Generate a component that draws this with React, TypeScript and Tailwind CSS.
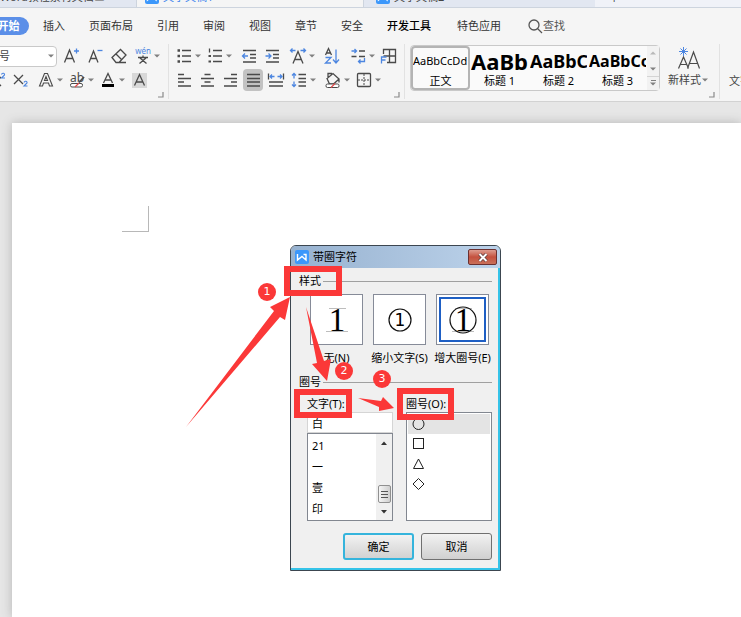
import { useState } from 'react'
import type { ReactNode } from 'react'

const INK = '#4a4a4a'
const BLUE = '#4d86e0'
const RED = '#fb3838'

function Caret() {
  return (
    <svg width="8" height="6" viewBox="0 0 8 6" className="shrink-0">
      <path d="M1 1.500h6L4 4.500z" fill="#808080" />
    </svg>
  )
}

/** Ribbon button: 20px icon cell, optional drop-down caret on its right. */
function Tool({
  label,
  caret,
  active,
  children
}: {
  label: string
  caret?: boolean
  active?: boolean
  children: ReactNode
}) {
  return (
    <button
      title={label}
      aria-label={label}
      className={`flex h-[22px] shrink-0 items-center rounded ${active ? 'bg-[#c2c2c2]' : ''}`}
    >
      <svg
        width="20"
        height="20"
        viewBox="0 0 20 20"
        fill="none"
        stroke={INK}
        strokeWidth="1.3"
        className="shrink-0"
      >
        {children}
      </svg>
      {caret && <Caret />}
    </button>
  )
}

function Corner() {
  return (
    <svg width="6" height="6" viewBox="0 0 6 6" className="absolute right-1 bottom-px">
      <path d="M5 0v5H0" fill="none" stroke="#8a8a8a" strokeWidth="1.2" />
    </svg>
  )
}

function WpsLogo() {
  return (
    <svg width="14" height="14" viewBox="0 0 14 14" className="shrink-0">
      <rect width="14" height="14" rx="2" fill="#3b97fb" />
      <path d="M2.500 4v6L7 6.500l4 3.500V4.500H8.500" fill="none" stroke="#fff" strokeWidth="1.400" />
    </svg>
  )
}

function DocTabs() {
  return (
    <div className="flex h-2 shrink-0 items-end overflow-hidden border-b border-[#cdd4de] bg-[#f0f2f8] text-[11px] leading-4 whitespace-nowrap text-[#444]">
      <div className="flex h-5 w-[137px] shrink-0 items-center border-r border-[#cdd4de] bg-[#e2e7f1]">
        <span className="w-[94px]">Word教程素材文档</span>
        <span className="text-[#888]">⊥</span>
      </div>
      <div className="flex h-5 w-[226px] shrink-0 items-center gap-1 bg-[#f5f5f5] pl-2 text-[#3b82ee]">
        <WpsLogo />
        文字文稿1
      </div>
      <div className="flex h-5 w-[232px] shrink-0 items-center gap-1 border-l border-[#cdd4de] bg-[#e2e7f1] pl-3">
        <WpsLogo />
        文字文稿2
      </div>
      <div className="h-4 flex-1 pl-4">+</div>
    </div>
  )
}

const MENUS = ['插入', '页面布局', '引用', '审阅', '视图', '章节', '安全', '开发工具', '特色应用']

function MenuBar() {
  return (
    <nav className="flex h-9 shrink-0 items-center gap-[27px] text-[11px] whitespace-nowrap text-[#333]">
      <button className="-ml-4 h-[18px] w-[45px] shrink-0 rounded-full bg-[#5b8fe8] pl-1 font-bold text-white">
        开始
      </button>
      <div className="-ml-[13px] flex items-center gap-6">
        {MENUS.map((m) => (
          <button key={m} className={m === '开发工具' ? 'mr-[2px] font-medium text-black' : ''}>
            {m}
          </button>
        ))}
      </div>
      <button className="flex items-center text-[#555]">
        <svg width="15" height="16" viewBox="0 0 15 16" fill="none" stroke="#555" strokeWidth="1.3">
          <circle cx="6" cy="7" r="5" />
          <path d="M9.500 10.500l4.500 4.500" />
        </svg>
        查找
      </button>
    </nav>
  )
}

function FontGroup() {
  return (
    <div className="relative flex h-[55px] w-[169px] shrink-0 flex-col gap-[2px] border-r border-[#e2e2e2] pt-px">
      <div className="flex h-[22px] items-center gap-1">
        <div className="relative -ml-[60px] w-[117px] shrink-0">
          <select
            aria-label="字号"
            className="block h-[21px] w-full appearance-none rounded border border-[#c9c9c9] bg-white pl-[47px] text-[11px] text-[#444]"
          >
            <option>五号</option>
          </select>
          <span className="pointer-events-none absolute inset-y-0 right-[2px] flex items-center">
            <Caret />
          </span>
        </div>
        <Tool label="增大字号">
          <path d="M3.500 16.500L8.500 4l5 12.500M5.500 12.500h6" />
          <path d="M13 5h5M15.500 2.500v5" stroke={BLUE} />
        </Tool>
        <Tool label="减小字号">
          <path d="M4 16.500L8.500 5 13 16.500M5.500 12.500h6" />
          <path d="M12.500 4.500h5" stroke={BLUE} />
        </Tool>
        <Tool label="清除格式">
          <path d="M3 11.500L11.500 3.500l5.500 5.500-7 7.500H7zM7 8l5.500 5.500M9 16.500h8" />
        </Tool>
        <Tool label="拼音指南" caret>
          <text
            x="10"
            y="8"
            textAnchor="middle"
            fontSize="8"
            stroke="none"
            fill={BLUE}
            fontFamily="Noto Sans"
          >
            wén
          </text>
          <path d="M5 11.500h10M10 9.500v2M7 12l6.500 5.500M13 12l-6.500 5.500" />
        </Tool>
      </div>
      <div className="-ml-[13px] flex h-[22px] items-center gap-[3px]">
        <Tool label="上标">
          <path d="M5 7l9 9M14 7l-9 9" />
          <path d="M14.500 4.500c.5-2 3.500-1.500 3 .5L14.500 8h3.500" stroke={BLUE} strokeWidth="1.100" />
        </Tool>
        <Tool label="下标">
          <path d="M4 5l9 9M13 5l-9 9" />
          <path d="M14 12.500c.5-2 3.500-1.500 3 .5L14 16h3.500" stroke={BLUE} strokeWidth="1.100" />
        </Tool>
        <span />
        <Tool label="文字效果" caret>
          <path d="M3.500 16L8.500 3.500h3l5 12.500h-3L12.500 13h-5l-1 3zM8.500 10.500h3L10 6.500z" strokeWidth="1.100" />
        </Tool>
        <Tool label="突出显示" caret>
          <text
            x="3"
            y="12"
            fontSize="12"
            stroke="none"
            fill={INK}
            fontFamily="Noto Sans"
          >
            ab
          </text>
          <rect x="3.500" y="13.500" width="12" height="3.500" rx="1.500" fill="#fff" strokeWidth="1" />
          <path d="M8 17l4-4" stroke="#e04b4b" />
          <path d="M12 12.500l5-5.500" strokeWidth="1.800" />
        </Tool>
        <Tool label="字体颜色" caret>
          <path d="M5.500 13L10 3.500 14.500 13M7 10h6" />
          <path d="M4 15.500h12" stroke="#000" strokeWidth="3" />
        </Tool>
        <Tool label="字符底纹">
          <rect x="3" y="3" width="15" height="15" fill="#d8d8d8" stroke="none" />
          <path d="M5.500 15.500l5-11 5 11M7 12h7" />
        </Tool>
      </div>
      <Corner />
    </div>
  )
}

function ParagraphGroup() {
  return (
    <div className="relative flex h-[55px] w-[236px] shrink-0 flex-col gap-[2px] border-r border-[#e2e2e2] pt-px pl-[5px]">
      <div className="flex h-[22px] items-center gap-[6px]">
        <div className="flex gap-[3px]">
          <Tool label="项目符号" caret>
            <path d="M8 4.500h9M8 10h9M8 15.500h9" />
            <path d="M3.500 4.500h2.500M3.500 10h2.500M3.500 15.500h2.500" strokeWidth="2.500" />
          </Tool>
          <Tool label="编号" caret>
            <path d="M8 4.500h9M8 10h9M8 15.500h9M4.500 2.500v4" />
            <path d="M3.500 10h2.500M3.500 15.500h2.500" strokeWidth="2.200" />
          </Tool>
        </div>
        <div className="flex gap-[3px]">
          <Tool label="减少缩进">
            <path d="M4 4.500h13M11 8.500h6M11 12h6M4 16h13" />
            <path d="M3.500 10H9M6 7.500L3.500 10 6 12.500" stroke={BLUE} />
          </Tool>
          <Tool label="增加缩进">
            <path d="M4 4.500h13M11 8.500h6M11 12h6M4 16h13" />
            <path d="M3.500 10H9M6.500 7.500L9 10l-2.500 2.500" stroke={BLUE} />
          </Tool>
        </div>
        <Tool label="中文版式" caret>
          <path d="M5 17.500l5-12 5 12M7 13.500h6" />
          <path d="M2.500 4.500h5M4.500 2.500l-2 2 2 2M12.500 4.500h5M15.500 2.500l2 2-2 2" stroke={BLUE} />
        </Tool>
        <Tool label="排序">
          <path d="M3.500 9l3-6.500L9.500 9M4.500 7h4" />
          <path d="M3.500 11.500H9L3.500 17H9M14 3.500V17M11 13.500l3 3.500 3-3.500" stroke={BLUE} />
        </Tool>
        <div className="flex gap-[3px]">
          <Tool label="显示编辑标记" caret>
            <path d="M11 5h6M3.500 10.500h5M11 10.500h6" />
            <path
              d="M3.500 5h5M6.500 3L8.500 5 6.500 7M16.500 12v3.500h-6M12.500 13.500l-2 2 2 2"
              stroke={BLUE}
            />
          </Tool>
          <Tool label="制表位">
            <path d="M4.500 8V3.500h12v13H8M4.500 10h12M10.500 3.500v13" />
            <path d="M2.500 17.500V11h5M2.500 14h4" stroke={BLUE} />
          </Tool>
        </div>
      </div>
      <div className="flex h-[22px] items-center gap-[6px]">
        <div className="flex gap-[3px]">
          <Tool label="左对齐">
            <path d="M4 4.500h6M4 8.500h13M4 12h6M4 16h13" />
          </Tool>
          <Tool label="居中对齐">
            <path d="M7.500 4.500h6M4 8.500h13M7.500 12h6M4 16h13" />
          </Tool>
          <Tool label="右对齐">
            <path d="M11 4.500h6M4 8.500h13M11 12h6M4 16h13" />
          </Tool>
          <Tool label="两端对齐" active>
            <path d="M4 4.500h13M4 8.500h13M4 12h13M4 16h13" />
          </Tool>
          <Tool label="分散对齐">
            <path d="M2.500 3.500v6M17.500 3.500v6M3 12h14M3 16h14" />
            <path d="M4 6.500h4.500M6 4.500l-2 2 2 2M11.500 6.500H16M14 4.500l2 2-2 2" stroke={BLUE} />
          </Tool>
          <Tool label="行距" caret>
            <path d="M9.500 4.500H17M9.500 8.500H17M9.500 12H17M9.500 16H17" />
            <path
              d="M5 3.500v5M3 5.500l2-2 2 2M5 11.500v5M3 14.500l2 2 2-2"
              stroke={BLUE}
            />
          </Tool>
        </div>
        <div className="flex gap-[3px]">
          <Tool label="底纹颜色" caret>
            <path d="M4 8.500L10 3.500l6 5.500-5.500 5H6.500zM5 8V3.500h4M16 9v3.500" />
            <rect x="3" y="14" width="13" height="3.500" rx="1.500" fill="#fff" strokeWidth="1" />
            <path d="M8 17.500l4-4" stroke="#e04b4b" />
          </Tool>
          <Tool label="边框" caret>
            <rect x="3.500" y="3.500" width="13" height="13" rx="1" />
            <path d="M10 4v12M4 10h12" strokeWidth="1" strokeDasharray="2 1" />
          </Tool>
        </div>
      </div>
      <Corner />
    </div>
  )
}

const STYLES = [
  { name: '正文', sample: 'AaBbCcDd', look: 'text-[11px]' },
  { name: '标题 1', sample: 'AaBb', look: 'text-[22px] font-bold' },
  { name: '标题 2', sample: 'AaBbC', look: 'text-[18px] font-bold' },
  { name: '标题 3', sample: 'AaBbCc', look: 'text-[16px] font-bold' }
]

function StylesGroup() {
  return (
    <div className="relative flex h-[55px] w-[315px] shrink-0 gap-[8px] border-r border-[#e2e2e2] pt-px pl-[5px]">
      <div className="flex h-[46px] w-[250px] rounded border border-[#c9c9c9] bg-[#fafafa]">
        {STYLES.map((s, i) => (
          <button
            key={s.name}
            className={`flex w-[59px] shrink-0 flex-col overflow-hidden text-black ${
              i === 0 ? 'rounded border-2 border-[#b4b4b4]' : 'border-y-2 border-x border-transparent'
            }`}
          >
            <span className={`flex h-[26px] w-full items-center overflow-hidden leading-6 ${s.look}`}>
              {s.sample}
            </span>
            <span className="w-full text-center text-[11px] leading-[14px]">{s.name}</span>
          </button>
        ))}
        <div className="flex flex-1 flex-col items-center bg-[#f2f2f2]">
          <button aria-label="上一行" className="flex h-[15px] rotate-180 items-center opacity-50">
            <Caret />
          </button>
          <button aria-label="下一行" className="flex h-[15px] items-center">
            <Caret />
          </button>
          <button
            aria-label="更多样式"
            className="flex h-[14px] w-full flex-col items-center justify-center border-t border-[#d4d4d4]"
          >
            <span className="h-px w-[5px] bg-[#808080]" />
            <Caret />
          </button>
        </div>
      </div>
      <button className="flex h-[46px] flex-col items-center text-[11px] leading-[14px] whitespace-nowrap text-[#444]">
        <svg width="24" height="28" viewBox="0 0 24 28" fill="none" stroke={INK} strokeWidth="1.2">
          <path d="M1.500 23.500L6.500 12l5 11.500M3.500 19.500h6M10.500 23.500L16.500 7l6 16.500M12.500 18.500h8" />
          <path d="M6.500 2v9M2 6.500h9M3.500 3.500l6 6M9.500 3.500l-6 6" stroke={BLUE} strokeWidth="1" />
        </svg>
        <span className="flex items-center">
          新样式
          <Caret />
        </span>
      </button>
      <Corner />
    </div>
  )
}

const PRESETS = [
  { id: 'none', label: '无(N)' },
  { id: 'shrink', label: '缩小文字(S)' },
  { id: 'grow', label: '增大圈号(E)' }
]

function PresetGlyph({ id }: { id: string }) {
  return (
    <svg width="40" height="40" viewBox="0 0 40 40" className="shrink-0">
      {id !== 'shrink' && (
        <path d="M12 8.500h17M9 31.500h22" stroke="#bdbdbd" strokeWidth="1" />
      )}
      {id !== 'none' && (
        <circle cx="20" cy="20" r={id === 'grow' ? 13 : 11} fill="none" stroke="#111" strokeWidth="1.200" />
      )}
      {id === 'shrink' ? (
        <text x="20" y="26" fontSize="17" textAnchor="middle" fontFamily="DejaVu Sans">
          1
        </text>
      ) : (
        <text x="20" y="31" fontSize="33" textAnchor="middle" fontFamily="Liberation Serif">
          1
        </text>
      )}
    </svg>
  )
}

function SectionTitle({ children }: { children: ReactNode }) {
  return (
    <div className="flex h-4 items-center gap-[2px] pr-2 pl-2">
      <span>{children}</span>
      <span className="h-px flex-1 bg-[#a0a0a0]" />
    </div>
  )
}

const SHAPES = [
  { name: '圆形', el: <circle cx="6.500" cy="7" r="5.500" /> },
  { name: '方形', el: <rect x="1.500" y="1.500" width="10" height="10" /> },
  { name: '三角形', el: <path d="M6.500 2L11.500 11.500h-10z" /> },
  { name: '菱形', el: <path d="M6.500 1.500L12 7l-5.500 5.500L1 7z" /> }
]

function EncloseDialog() {
  const [preset, setPreset] = useState('grow')
  const [text, setText] = useState('白')
  const [shape, setShape] = useState(0)

  return (
    <div
      role="dialog"
      aria-label="带圈字符"
      className="absolute top-[245px] left-[290px] w-[211px] rounded-t-md border border-[#3c4650] bg-[#f0f0f0] pb-[10px] text-[11px] leading-4 text-black shadow-[inset_-2px_-2px_0_#35c3e8]"
    >
      <div className="flex h-[22px] items-center gap-1 rounded-t-[5px] bg-linear-to-r from-[#97b2d0] to-[#bcd2ea] pr-[3px] pl-1">
        <WpsLogo />
        <span className="flex-1">带圈字符</span>
        <button
          aria-label="关闭"
          className="flex h-4 w-[29px] items-center justify-center rounded-[2px] border border-[#6b3030] bg-linear-to-b from-[#dd9c90] via-[#c4503e] to-[#c9705a]"
        >
          <svg width="12" height="9" viewBox="0 0 12 9">
            <path d="M2.500 1l7 7M9.500 1l-7 7" stroke="#5c3a3a" strokeWidth="3.500" />
            <path d="M2.500 1l7 7M9.500 1l-7 7" stroke="#fff" strokeWidth="2" />
          </svg>
        </button>
      </div>

      <div className="mt-[5px]">
        <SectionTitle>样式</SectionTitle>
      </div>
      <div className="mt-[5px] grid grid-cols-3 pr-[6px] pl-[14px]">
        {PRESETS.map((p) => (
          <button
            key={p.id}
            aria-pressed={preset === p.id}
            onClick={() => setPreset(p.id)}
            className="flex flex-col items-center gap-[5px] whitespace-nowrap"
          >
            <span className="flex h-[51px] w-[53px] border border-[#868b98] bg-white p-[2px]">
              <span
                className={`flex flex-1 items-center justify-center border-2 ${
                  preset === p.id ? 'border-[#1e5fc4]' : 'border-transparent'
                }`}
              >
                <PresetGlyph id={p.id} />
              </span>
            </span>
            <span>{p.label}</span>
          </button>
        ))}
      </div>

      <div className="mt-2">
        <SectionTitle>圈号</SectionTitle>
      </div>
      <div className="mt-[6px] flex gap-[13px] pl-4">
        <div className="w-[86px]">
          <label htmlFor="enclose-text">文字(T):</label>
          <input
            id="enclose-text"
            value={text}
            onChange={(e) => setText(e.target.value)}
            className="block h-[21px] w-full border border-[#d5d5d5] bg-white px-1 text-[11px]"
          />
          <div className="flex h-[88px] border border-[#828790] bg-white">
            <ul className="flex-1 pt-[1px]">
              {['21', '一', '壹', '印'].map((t) => (
                <li key={t}>
                  <button
                    onClick={() => setText(t)}
                    className="block h-[21px] w-full px-1 text-left"
                  >
                    {t}
                  </button>
                </li>
              ))}
            </ul>
            <div className="flex w-4 flex-col items-center bg-[#f0f0f0]">
              <svg width="8" height="18" viewBox="0 0 8 18">
                <path d="M1 11h6L4 7.500z" fill="#333" />
              </svg>
              <div className="flex-1" />
              <div className="flex h-[18px] w-[13px] flex-col items-center justify-center gap-[2px] rounded-[2px] border border-[#909090] bg-linear-to-r from-[#f5f5f5] to-[#cfcfcf]">
                <span className="h-px w-[7px] bg-[#555]" />
                <span className="h-px w-[7px] bg-[#555]" />
                <span className="h-px w-[7px] bg-[#555]" />
              </div>
              <svg width="8" height="17" viewBox="0 0 8 17">
                <path d="M1 7h6L4 10.500z" fill="#333" />
              </svg>
            </div>
          </div>
        </div>
        <div className="flex w-[86px] flex-col">
          <span>圈号(O):</span>
          <ul className="flex-1 border border-[#828790] bg-white p-px">
            {SHAPES.map((s, i) => (
              <li key={s.name}>
                <button
                  aria-label={s.name}
                  onClick={() => setShape(i)}
                  className={`flex h-5 w-full items-center pl-1 ${shape === i ? 'bg-[#e4e4e4]' : ''}`}
                >
                  <svg width="14" height="14" viewBox="0 0 14 14" fill="none" stroke="#222">
                    {s.el}
                  </svg>
                </button>
              </li>
            ))}
          </ul>
        </div>
      </div>

      <div className="mt-3 flex justify-end gap-[7px] pr-2">
        <button className="h-[27px] w-[71px] rounded-[3px] border-2 border-[#35b4dc] bg-linear-to-b from-[#f2f2f2] to-[#d2d2d2]">
          确定
        </button>
        <button className="h-[27px] w-[71px] rounded-[3px] border border-[#707070] bg-linear-to-b from-[#f2f2f2] to-[#d0d0d0]">
          取消
        </button>
      </div>
    </div>
  )
}

/** Red tutorial marks that lie over the window: frames, arrows and step numbers. */
function Annotations() {
  return (
    <div className="pointer-events-none absolute inset-0">
      <svg className="absolute inset-0 h-full w-full" fill={RED}>
        <path d="M186 427L274 311l-4-4 20-10-5 23-5-3z" />
        <path d="M306 307l18 54 7-2-4 22-15-17 5-1z" />
        <path d="M358 398l23 3 2-4 11 11-15 3v-4z" />
        <g fill="none" stroke={RED} strokeWidth="6">
          <path d="M287 269h52v24h-52z" />
          <path d="M297 392h52v23h-52z" />
          <path d="M400 391h51v26h-51z" />
        </g>
      </svg>
      <Step n={1} at="left-[258px] top-[283px]" />
      <Step n={2} at="left-[335px] top-[362px]" />
      <Step n={3} at="left-[373px] top-[370px]" />
    </div>
  )
}

function Step({ n, at }: { n: number; at: string }) {
  return (
    <span
      className={`absolute flex size-[18px] items-center justify-center rounded-full bg-[#fb3838] font-['DejaVu_Sans',sans-serif] text-[11px] text-white ${at}`}
    >
      {n}
    </span>
  )
}

export default function App() {
  return (
    <div className="relative flex min-h-screen flex-col overflow-hidden bg-[#e6e6e6] font-['Noto_Sans','Noto_Sans_CJK_SC',sans-serif]">
      <header className="flex flex-col border-b border-[#d2d2d2] bg-[#f5f5f5]">
        <DocTabs />
        <MenuBar />
        <div className="flex h-[57px] overflow-hidden">
          <FontGroup />
          <ParagraphGroup />
          <StylesGroup />
          <button className="mt-[29px] h-4 shrink-0 pl-[9px] text-[11px] whitespace-nowrap text-[#444]">
            文字排版
          </button>
        </div>
      </header>
      <main className="mt-[21px] ml-3 flex-1 bg-white pt-[83px] pl-[110px] shadow-[0_0_10px_#b5b5b5]">
        <div className="h-[26px] w-[27px] border-r border-b border-[#b8b8b8]" />
      </main>
      <EncloseDialog />
      <Annotations />
    </div>
  )
}
